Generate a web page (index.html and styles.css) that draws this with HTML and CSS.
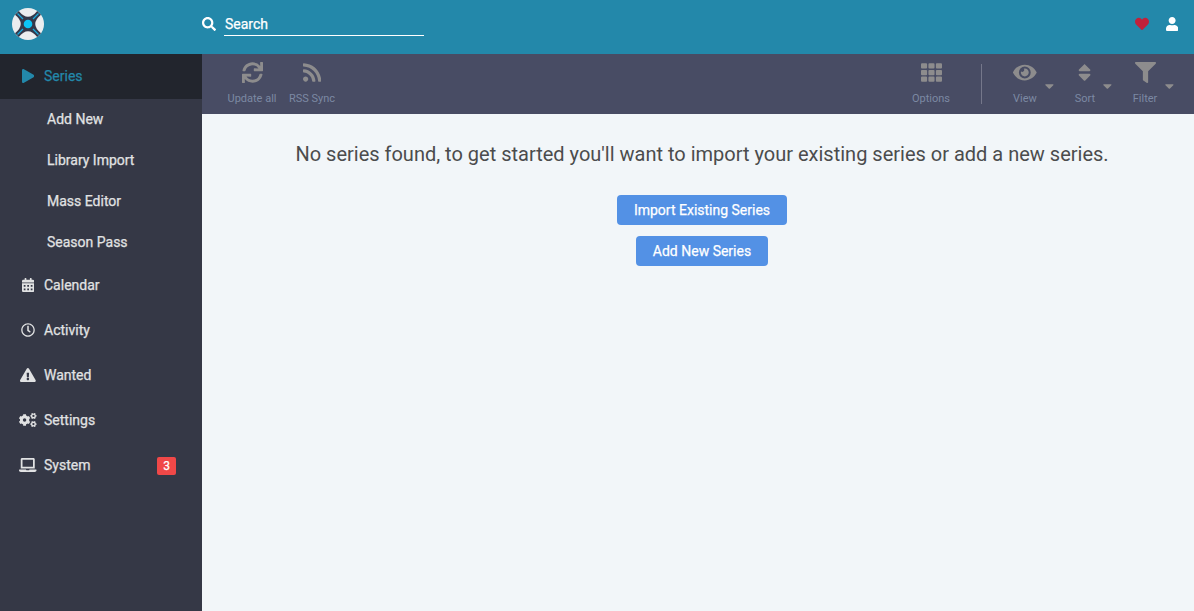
FILE: index.html
```html
<!DOCTYPE html>
<html lang="en">
<head>
<meta charset="utf-8">
<title>Series</title>
<link rel="stylesheet" href="styles.css">
</head>
<body>
<div class="app">
  <header class="header">
    <a class="logo"><svg viewBox="0 0 32 32" width="32" height="32">
      <circle cx="16" cy="16" r="16" fill="#ebedef"/>
      <path d="M6.8 3 Q16 14.5 25.2 3 L29 6.8 Q17.5 16 29 25.2 L25.2 29 Q16 17.5 6.8 29 L3 25.2 Q14.5 16 3 6.8Z" fill="#34384a"/>
      <circle cx="16" cy="16" r="6.8" fill="#34384a"/>
      <path d="M5.5 5.5L11 11M26.500 5.500L21 11M5.500 26.500L11 21M26.500 26.500L21 21" stroke="#16a9dc" stroke-width="1.300"/>
      <circle cx="16" cy="16" r="4.300" fill="#0cc3f5"/>
    </svg></a>
    <div class="search">
      <svg viewBox="0 0 512 512" width="14" height="14"><path d="M505 442.700L405.300 343c-4.500-4.500-10.600-7-17-7H372c27.600-35.300 44-79.700 44-128C416 93.100 322.900 0 208 0S0 93.100 0 208s93.100 208 208 208c48.300 0 92.700-16.400 128-44v16.300c0 6.400 2.500 12.500 7 17l99.700 99.700c9.400 9.400 24.600 9.400 33.900 0l28.300-28.300c9.400-9.400 9.400-24.600.1-34zM208 336c-70.700 0-128-57.200-128-128 0-70.700 57.200-128 128-128 70.700 0 128 57.200 128 128 0 70.700-57.200 128-128 128z"/></svg>
      <span class="search-input">Search</span>
    </div>
    <div class="header-actions">
      <svg class="heart" viewBox="0 0 512 512" width="14" height="14"><path d="M462.300 62.600C407.500 15.900 326 24.300 275.700 76.200L256 96.500l-19.700-20.300C186.100 24.300 104.500 15.900 49.700 62.600c-62.800 53.600-66.100 149.800-9.900 207.900l193.500 199.800c12.500 12.900 32.800 12.900 45.300 0l193.500-199.800c56.300-58.100 53-154.300-9.800-207.900z"/></svg>
      <svg viewBox="0 0 448 512" width="12.250" height="14"><path d="M224 256c70.700 0 128-57.300 128-128S294.700 0 224 0 96 57.300 96 128s57.300 128 128 128zm89.600 32h-16.700c-22.200 10.200-46.900 16-72.900 16s-50.600-5.800-72.900-16h-16.700C60.200 288 0 348.200 0 422.400V464c0 26.500 21.500 48 48 48h352c26.500 0 48-21.500 48-48v-41.600c0-74.200-60.200-134.400-134.400-134.400z"/></svg>
    </div>
  </header>

  <div class="body">
    <nav class="sidebar">
      <a class="item active"><span class="icon"><svg viewBox="0 0 448 512" width="12.250" height="14"><path d="M424.400 214.700L72.400 6.600C43.800-10.300 0 6.100 0 47.900V464c0 37.500 40.700 60.100 72.400 41.300l352-208c31.400-18.500 31.500-64.100 0-82.600z"/></svg></span>Series</a>
      <a class="child">Add New</a>
      <a class="child">Library Import</a>
      <a class="child">Mass Editor</a>
      <a class="child">Season Pass</a>
      <a class="item"><span class="icon"><svg viewBox="0 0 448 512" width="12.250" height="14"><path fill-rule="evenodd" d="M0 464c0 26.500 21.500 48 48 48h352c26.500 0 48-21.500 48-48V192H0zM64 256h64v64H64zM192 256h64v64h-64zM320 256h64v64h-64zM64 384h64v64H64zM192 384h64v64h-64zM320 384h64v64h-64zM400 64h-48V16c0-8.800-7.200-16-16-16h-32c-8.800 0-16 7.200-16 16v48H160V16c0-8.800-7.200-16-16-16h-32c-8.800 0-16 7.200-16 16v48H48C21.500 64 0 85.500 0 112v48h448v-48c0-26.500-21.500-48-48-48z"/></svg></span>Calendar</a>
      <a class="item"><span class="icon"><svg viewBox="0 0 512 512" width="14" height="14"><path d="M256 8C119 8 8 119 8 256s111 248 248 248 248-111 248-248S393 8 256 8zm0 448c-110.500 0-200-89.500-200-200S145.500 56 256 56s200 89.500 200 200-89.500 200-200 200zm61.800-104.400l-84.900-61.700c-3.100-2.300-4.900-5.900-4.900-9.700V116c0-6.600 5.400-12 12-12h32c6.600 0 12 5.400 12 12v141.700l66.800 48.600c5.400 3.900 6.500 11.400 2.600 16.800L334.600 349c-3.900 5.300-11.400 6.500-16.800 2.600z"/></svg></span>Activity</a>
      <a class="item"><span class="icon"><svg viewBox="0 0 576 512" width="15.750" height="14"><path d="M569.517 440.013C587.975 472.007 564.806 512 527.940 512H48.054c-36.937 0-59.999-40.055-41.577-71.987L246.423 23.985c18.467-32.009 64.720-31.951 83.154 0l239.940 416.028zM288 354c-25.405 0-46 20.595-46 46s20.595 46 46 46 46-20.595 46-46-20.595-46-46-46zm-43.673-165.346l7.418 136c.347 6.364 5.609 11.346 11.982 11.346h48.546c6.373 0 11.635-4.982 11.982-11.346l7.418-136c.375-6.874-5.098-12.654-11.982-12.654h-63.383c-6.884 0-12.356 5.780-11.981 12.654z"/></svg></span>Wanted</a>
      <a class="item"><span class="icon"><svg viewBox="0 0 640 512" width="17.500" height="14"><g fill="none" stroke="currentColor">
        <circle cx="204" cy="256" r="118" stroke-width="108"/>
        <path stroke-width="104" d="M204 46V150M204 466V362M22 151L112 203M386 151L296 203M22 361L112 309M386 361L296 309"/>
        <circle cx="528" cy="108" r="67" stroke-width="50"/>
        <path stroke-width="48" d="M644 108h-38M412 108h38M586 8l-19 33M470 8l19 33M586 208l-19-33M470 208l19-33"/>
        <circle cx="528" cy="404" r="67" stroke-width="50"/>
        <path stroke-width="48" d="M644 404h-38M412 404h38M586 304l-19 33M470 304l19 33M586 504l-19-33M470 504l19-33"/>
      </g></svg></span>Settings</a>
      <a class="item"><span class="icon"><svg viewBox="0 0 640 512" width="17.500" height="14"><path d="M624 416H381.540c-.740 19.810-14.710 32-32.740 32H288c-18.690 0-33.020-17.470-32.770-32H16c-8.800 0-16 7.200-16 16v16c0 35.200 28.800 64 64 64h512c35.200 0 64-28.800 64-64v-16c0-8.800-7.200-16-16-16zM576 48c0-26.400-21.600-48-48-48H112C85.600 0 64 21.600 64 48v336h512V48zm-64 272H128V64h384v256z"/></svg></span>System<span class="badge">3</span></a>
    </nav>

    <main class="page">
      <div class="toolbar">
        <div class="group">
          <a class="tool"><svg viewBox="0 0 512 512" width="21" height="21"><path d="M440.650 12.570l4 82.770A247.160 247.160 0 0 0 255.830 8C134.730 8 33.910 94.920 12.290 209.820A12 12 0 0 0 24.090 224h49.050a12 12 0 0 0 11.670-9.260 175.910 175.910 0 0 1 317-56.940l-101.460-4.860a12 12 0 0 0-12.570 12v47.410a12 12 0 0 0 12 12H500a12 12 0 0 0 12-12V12a12 12 0 0 0-12-12h-47.370a12 12 0 0 0-11.980 12.570zM255.830 432a175.610 175.610 0 0 1-146-77.800l101.800 4.870a12 12 0 0 0 12.570-12v-47.400a12 12 0 0 0-12-12H12a12 12 0 0 0-12 12V500a12 12 0 0 0 12 12h47.350a12 12 0 0 0 12-12.600l-4.150-82.570A247.170 247.170 0 0 0 255.830 504c121.110 0 221.930-86.920 243.550-201.820a12 12 0 0 0-11.800-14.180h-49.050a12 12 0 0 0-11.670 9.260A175.860 175.860 0 0 1 255.830 432z"/></svg><span>Update all</span></a>
          <a class="tool"><svg viewBox="0 0 448 512" width="18.375" height="21"><path d="M128.081 415.959c0 35.369-28.672 64.041-64.041 64.041S0 451.328 0 415.959s28.672-64.041 64.041-64.041 64.040 28.673 64.040 64.041zm175.660 47.250c-8.354-154.600-132.185-278.587-286.950-286.950C7.656 175.765 0 183.105 0 192.253v48.069c0 8.415 6.490 15.472 14.887 16.018 111.832 7.284 201.473 96.702 208.772 208.772.547 8.397 7.604 14.887 16.018 14.887h48.069c9.149.001 16.489-7.655 15.995-16.790zm144.249.288C439.596 229.677 251.465 40.445 16.503 32.010 7.473 31.686 0 38.981 0 48.016v48.068c0 8.625 6.835 15.645 15.453 15.999 191.179 7.839 344.627 161.316 352.465 352.465.353 8.618 7.373 15.453 15.999 15.453h48.068c9.034-.001 16.329-7.474 16.005-16.504z"/></svg><span>RSS Sync</span></a>
        </div>
        <div class="group">
          <a class="tool"><svg viewBox="0 0 512 512" width="21" height="21"><path d="M24 32h101a24 24 0 0 1 24 24v80a24 24 0 0 1-24 24H24a24 24 0 0 1-24-24V56a24 24 0 0 1 24-24zm181 0h101a24 24 0 0 1 24 24v80a24 24 0 0 1-24 24H205a24 24 0 0 1-24-24V56a24 24 0 0 1 24-24zm182 0h101a24 24 0 0 1 24 24v80a24 24 0 0 1-24 24H387a24 24 0 0 1-24-24V56a24 24 0 0 1 24-24zM24 192h101a24 24 0 0 1 24 24v80a24 24 0 0 1-24 24H24a24 24 0 0 1-24-24v-80a24 24 0 0 1 24-24zm181 0h101a24 24 0 0 1 24 24v80a24 24 0 0 1-24 24H205a24 24 0 0 1-24-24v-80a24 24 0 0 1 24-24zm182 0h101a24 24 0 0 1 24 24v80a24 24 0 0 1-24 24H387a24 24 0 0 1-24-24v-80a24 24 0 0 1 24-24zM24 352h101a24 24 0 0 1 24 24v80a24 24 0 0 1-24 24H24a24 24 0 0 1-24-24v-80a24 24 0 0 1 24-24zm181 0h101a24 24 0 0 1 24 24v80a24 24 0 0 1-24 24H205a24 24 0 0 1-24-24v-80a24 24 0 0 1 24-24zm182 0h101a24 24 0 0 1 24 24v80a24 24 0 0 1-24 24H387a24 24 0 0 1-24-24v-80a24 24 0 0 1 24-24z"/></svg><span>Options</span></a>
          <div class="separator"></div>
          <a class="tool"><svg viewBox="0 0 576 512" width="23.625" height="21"><path d="M572.520 241.400C518.290 135.590 410.930 64 288 64S57.680 135.640 3.480 241.410a32.350 32.350 0 0 0 0 29.190C57.710 376.410 165.070 448 288 448s230.320-71.640 284.520-177.410a32.350 32.350 0 0 0 0-29.190zM288 400a144 144 0 1 1 144-144 143.930 143.930 0 0 1-144 144zm0-240a95.310 95.310 0 0 0-25.310 3.790 47.850 47.850 0 0 1-66.900 66.900A95.780 95.780 0 1 0 288 160z"/></svg><span>View</span><svg class="caret" viewBox="0 0 320 512" width="8.750" height="14"><path d="M31.300 192h257.300c17.800 0 26.700 21.500 14.100 34.100L174.100 354.800c-7.800 7.800-20.500 7.800-28.300 0L17.200 226.100C4.600 213.500 13.500 192 31.300 192z"/></svg></a>
          <a class="tool"><svg viewBox="0 0 320 512" width="13.125" height="21"><path d="M41 288h238c21.400 0 32.100 25.900 17 41L177 448c-9.400 9.400-24.600 9.400-33.900 0L24 329c-15.100-15.100-4.400-41 17-41zm255-105L177 64c-9.400-9.400-24.600-9.400-33.900 0L24 183c-15.100 15.100-4.400 41 17 41h238c21.400 0 32.100-25.900 17-41z"/></svg><span>Sort</span><svg class="caret caret-sort" viewBox="0 0 320 512" width="8.750" height="14"><path d="M31.300 192h257.300c17.800 0 26.700 21.500 14.100 34.100L174.100 354.800c-7.800 7.800-20.500 7.800-28.300 0L17.200 226.100C4.600 213.500 13.500 192 31.300 192z"/></svg></a>
          <a class="tool"><svg viewBox="0 0 512 512" width="21" height="21"><path d="M487.976 0H24.028C2.710 0-8.047 25.866 7.058 40.971L192 225.941V432c0 7.831 3.821 15.170 10.237 19.662l80 55.980C298.020 518.690 320 507.493 320 487.980V225.941l184.947-184.970C520.021 25.896 509.338 0 487.976 0z"/></svg><span>Filter</span><svg class="caret" viewBox="0 0 320 512" width="8.750" height="14"><path d="M31.300 192h257.300c17.800 0 26.700 21.500 14.100 34.100L174.100 354.800c-7.800 7.800-20.500 7.800-28.300 0L17.200 226.100C4.600 213.500 13.500 192 31.300 192z"/></svg></a>
        </div>
      </div>
      <div class="content">
        <div class="message">No series found, to get started you'll want to import your existing series or add a new series.</div>
        <a class="button">Import Existing Series</a>
        <a class="button">Add New Series</a>
      </div>
    </main>
  </div>
</div>
</body>
</html>
```
FILE: styles.css
```css
* { box-sizing: border-box; }
body {
  margin: 0;
  font: 14px/20px Roboto, "Liberation Sans", sans-serif;
  color: #4b4c4d;
}
svg { display: block; flex: none; fill: currentColor; }
.app { display: flex; flex-direction: column; height: 611px; overflow: hidden; }

.header {
  display: flex;
  align-items: center;
  flex: none;
  height: 54px;
  padding: 0 16px 6px 12px;
  background: #2388aa;
  color: #fff;
}
.logo { width: 190px; }
.search { display: flex; align-items: center; }
.search-input {
  width: 200px;
  height: 24px;
  margin-left: 8px;
  padding: 2px 1px 0;
  border-bottom: 1px solid #fff;
  line-height: 20px;
}
.search-input, .item, .child, .button { -webkit-text-stroke: 0.25px currentColor; }
.header-actions { display: flex; gap: 17px; margin-left: auto; }
.heart { color: #c1213a; }

.body { display: flex; flex: 1; min-height: 0; }
.sidebar { flex: none; width: 202px; background: #353846; color: #e1e2e3; }
.item, .child { display: flex; align-items: center; }
.item { height: 45px; padding: 0 26px 1px 19px; }
.child { height: 41px; padding: 0 0 1px 47px; }
.icon { display: flex; justify-content: center; width: 18px; margin-right: 7px; }
.active { background: #22252d; color: #2388aa; }
.badge {
  width: 19px;
  height: 18px;
  margin: 2px 0 0 auto;
  border-radius: 2px;
  background: #f04848;
  color: #fff;
  font-size: 12px;
  line-height: 18px;
  text-align: center;
}

.page { flex: 1; background: #f2f6f9; }
.toolbar {
  display: flex;
  justify-content: space-between;
  height: 60px;
  padding: 0 19px 0 20px;
  background: #484c64;
  color: #8d8c8d;
}
.group { display: flex; }
.tool {
  position: relative;
  display: flex;
  flex-direction: column;
  align-items: center;
  width: 60px;
  padding-top: 8px;
}
.tool span { margin-top: 6px; color: #7c89a3; font-size: 11px; white-space: nowrap; }
.caret { position: absolute; top: 25px; right: 1px; }
.caret-sort { right: 3px; }
.separator { width: 1px; height: 40px; margin: 10px 13px 0 20px; background: #75778a; }

.content { display: flex; flex-direction: column; align-items: center; padding: 25px 0 0 8px; }
.message { margin-bottom: 26px; font-size: 20px; line-height: 30px; white-space: nowrap; }
.button {
  height: 30px;
  margin-bottom: 11px;
  padding: 0 16.5px;
  border-radius: 4px;
  background: #5391e5;
  color: #fff;
  line-height: 30px;
}
```
